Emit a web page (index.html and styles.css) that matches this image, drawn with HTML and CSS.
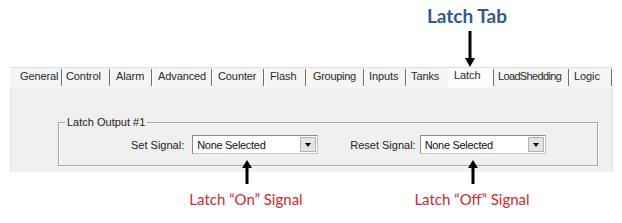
FILE: index.html
```html
<!DOCTYPE html>
<html lang="en">
<head>
  <meta charset="UTF-8" />
  <title>Latch Tab</title>
  <link rel="stylesheet" href="styles.css">
</head>
<body>

<div class="callout">
  <div class="callout-title">Latch Tab</div>
  <svg class="arrow-down" width="12" height="36" viewBox="0 0 12 36">
    <rect x="4.5" y="0" width="3" height="28" fill="#000"/>
    <polygon points="1,27 11,27 6,36" fill="#000"/>
  </svg>
</div>

<div class="dialog">
  <div class="tabs">
    <div class="tab">General</div>
    <div class="tab">Control</div>
    <div class="tab">Alarm</div>
    <div class="tab">Advanced</div>
    <div class="tab">Counter</div>
    <div class="tab">Flash</div>
    <div class="tab">Grouping</div>
    <div class="tab">Inputs</div>
    <div class="tab">Tanks</div>
    <div class="tab active">Latch</div>
    <div class="tab">LoadShedding</div>
    <div class="tab">Logic</div>
  </div>

  <div class="panel">
    <div class="group">
      <div class="group-title">Latch Output #1</div>
      <div class="group-row">
        <span class="field-label set">Set Signal:</span>
        <div class="combo">
          <span>None Selected</span>
          <span class="combo-btn"><i></i></span>
        </div>
        <span class="field-label reset">Reset Signal:</span>
        <div class="combo">
          <span>None Selected</span>
          <span class="combo-btn"><i></i></span>
        </div>
      </div>
    </div>
  </div>
</div>

<div class="notes">
  <div class="note">
    <svg width="12" height="24" viewBox="0 0 12 24">
      <polygon points="6,0 11,8 1,8" fill="#000"/>
      <rect x="4.5" y="7" width="3" height="17" fill="#000"/>
    </svg>
    <div class="note-text">Latch “On” Signal</div>
  </div>
  <div class="note">
    <svg width="12" height="24" viewBox="0 0 12 24">
      <polygon points="6,0 11,8 1,8" fill="#000"/>
      <rect x="4.5" y="7" width="3" height="17" fill="#000"/>
    </svg>
    <div class="note-text">Latch “Off” Signal</div>
  </div>
</div>

</body>
</html>
```

FILE: styles.css
```css
body {
  margin: 0;
  background: #fff;
  font-family: "Liberation Sans", Arial, sans-serif;
  font-size: 11px;
  color: #1a1a1a;
  width: 622px;
  height: 223px;
  overflow: hidden;
}

/* big blue caption with arrow */
.callout {
  width: 100px;
  margin-left: 417px;
  height: 67px;
  display: flex;
  flex-direction: column;
  align-items: center;
}

.callout-title {
  font-family: Lato, "Open Sans", sans-serif;
  font-weight: bold;
  font-size: 19px;
  line-height: 20px;
  color: #34588c;
  padding-top: 6px;
}

.arrow-down {
  display: block;
  margin-top: 5px;
  margin-left: 6px;
}

/* windows style tab dialog */
.dialog {
  margin-left: 10px;
  width: 603px;
}

.tabs {
  height: 21px;
  display: flex;
  align-items: flex-start;
  padding-left: 4px;
  background: #f5f5f5;
  border-top: 1px solid #dcdcdc;
  box-sizing: border-box;
}

.tab {
  box-sizing: border-box;
  height: 17px;
  margin-top: 1px;
  line-height: 15px;
  padding-left: 5px;
  border-right: 1px solid #6e6e6e;
  box-shadow: 1px 0 0 #fff;
  white-space: nowrap;
  letter-spacing: -0.1px;
  color: #2a2a2a;
}

.tab:nth-child(1) { width: 48px; padding-left: 6px; }
.tab:nth-child(2) { width: 48px; padding-left: 4px; }
.tab:nth-child(3) { width: 42px; padding-left: 6px; }
.tab:nth-child(4) { width: 60px; padding-left: 6px; }
.tab:nth-child(5) { width: 52px; padding-left: 6px; }
.tab:nth-child(6) { width: 42px; padding-left: 6px; }
.tab:nth-child(7) { width: 58px; padding-left: 7px; letter-spacing: -0.3px; }
.tab:nth-child(8) { width: 42px; }
.tab:nth-child(9) { width: 42px; border-right: none; box-shadow: none; }
.tab:nth-child(10) { width: 45px; border-right-color: transparent; box-shadow: none; }
.tab:nth-child(11) { width: 76px; padding-left: 4px; letter-spacing: -0.65px; border-left: 1px solid #6e6e6e; }
.tab:nth-child(12) { width: 43px; }

.tab.active {
  background: #fdfdfd;
  height: 20px;
  margin-top: 0;
  line-height: 14px;
  padding-left: 6px;
}

.panel {
  height: 84px;
  background: #f0f0f0;
  border-left: 1px solid #e2e2e2;
  border-right: 2px solid #e6e6e6;
  padding-top: 34px;
  padding-left: 47px;
  box-sizing: border-box;
}

.group {
  width: 540px;
  height: 44px;
  box-sizing: border-box;
  border: 1px solid #a8a8a8;
  box-shadow: inset 1px 1px 0 #fff, 1px 1px 0 #fff;
}

.group-title {
  display: table;
  margin: -8px 0 0 6px;
  padding: 0 2px;
  height: 14px;
  line-height: 14px;
  background: #f0f0f0;
  color: #222;
}

.group-row {
  display: flex;
  align-items: center;
  margin-top: 6px;
  padding-left: 72px;
}

.field-label {
  color: #222;
}

.field-label.set { margin-right: 8px; }
.field-label.reset { margin-left: 32px; margin-right: 4px; }

.combo {
  width: 126px;
  height: 19px;
  box-sizing: border-box;
  background: #fff;
  border: 1px solid #8a8a8a;
  border-right-color: #c4c4c4;
  border-bottom-color: #c4c4c4;
  display: flex;
  align-items: center;
  justify-content: space-between;
  padding-left: 4px;
  letter-spacing: -0.3px;
  color: #111;
}

.combo-btn {
  width: 16px;
  height: 15px;
  margin-right: 1px;
  box-sizing: border-box;
  background: #e4e4e4;
  border: 1px solid #b4b4b4;
  display: flex;
  align-items: center;
  justify-content: center;
}

.combo-btn i {
  width: 0;
  height: 0;
  border-left: 3px solid transparent;
  border-right: 3px solid transparent;
  border-top: 4px solid #000;
}

/* red annotations */
.notes {
  display: flex;
  margin-top: -12px;
  padding-left: 176px;
  gap: 86px;
}

.note {
  width: 140px;
  display: flex;
  flex-direction: column;
  align-items: center;
}

.note svg {
  display: block;
  margin-left: 2px;
}

.note-text {
  font-family: Lato, "Open Sans", sans-serif;
  font-size: 15px;
  line-height: 18px;
  margin-top: 6px;
  color: #cc2a2f;
  white-space: nowrap;
}
```
